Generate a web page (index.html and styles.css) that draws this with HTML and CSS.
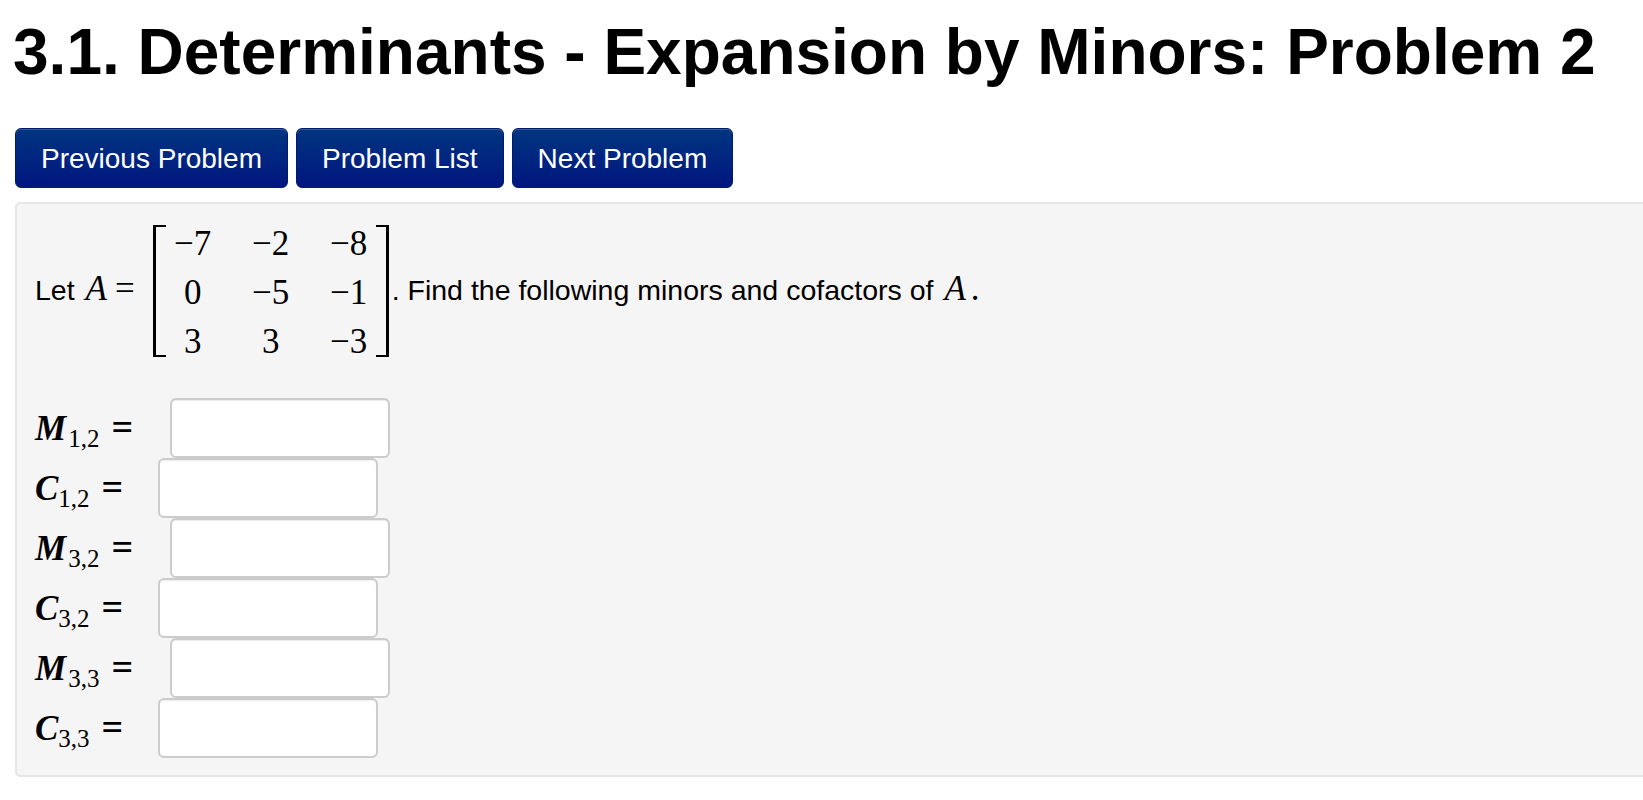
FILE: index.html
```html
<!DOCTYPE html>
<html>
<head>
<title>3.1. Determinants - Expansion by Minors: Problem 2</title>
<link rel="stylesheet" href="styles.css">
</head>

<body>

<h1>3.1. Determinants - Expansion by Minors: Problem 2</h1>

<div class="nav">
  <a class="btn">Previous Problem</a>
  <a class="btn">Problem List</a>
  <a class="btn">Next Problem</a>
</div>

<div class="well">
  <div class="intro">
    <span class="lead">Let <i class="math var">A</i><span class="math rel">=</span></span>
    <div class="matrix">
      <span>&minus;7</span><span>&minus;2</span><span>&minus;8</span>
      <span>0</span><span>&minus;5</span><span>&minus;1</span>
      <span>3</span><span>3</span><span>&minus;3</span>
    </div>
    <span class="after">. Find the following minors and cofactors of <i class="math var">A</i><span class="math stop">.</span></span>
  </div>

  <div class="answers">
    <div class="row wide"><span class="label"><b>M</b><sub>1,2</sub><span class="eq">=</span></span><input type="text"></div>
    <div class="row"><span class="label"><b>C</b><sub>1,2</sub><span class="eq">=</span></span><input type="text"></div>
    <div class="row wide"><span class="label"><b>M</b><sub>3,2</sub><span class="eq">=</span></span><input type="text"></div>
    <div class="row"><span class="label"><b>C</b><sub>3,2</sub><span class="eq">=</span></span><input type="text"></div>
    <div class="row wide"><span class="label"><b>M</b><sub>3,3</sub><span class="eq">=</span></span><input type="text"></div>
    <div class="row"><span class="label"><b>C</b><sub>3,3</sub><span class="eq">=</span></span><input type="text"></div>
  </div>
</div>

</body>
</html>
```

FILE: styles.css
```css
html, body {
  overflow: hidden;
}

body {
  margin: 0;
  padding: 0 0 0 15px;
  background: #fff;
  color: #000;
  font-family: "Liberation Sans", Arial, sans-serif;
  font-size: 28.5px;
}

h1 {
  margin: 0 0 0 -2px;
  padding-top: 15px;
  height: 73px;
  font-size: 64px;
  line-height: 74px;
  font-weight: bold;
  white-space: nowrap;
}

.nav {
  display: flex;
  gap: 8px;
  margin-top: 40px;
}

.btn {
  display: block;
  box-sizing: border-box;
  height: 60px;
  padding: 0 25px;
  font-size: 28px;
  line-height: 60px;
  color: #fff;
  border: 1px solid #001a6e;
  border-radius: 6px;
  background: linear-gradient(#003580, #001680);
  box-shadow: inset 0 1px 0 rgba(255,255,255,0.2);
}

.well {
  box-sizing: border-box;
  height: 575px;
  margin-top: 14px;
  margin-right: -10px;
  padding: 21px 0 0 18px;
  background: #f5f5f5;
  border: 2px solid #e6e6e6;
  border-right: 0;
  border-radius: 5px 0 0 5px;
}

.math {
  font-family: "Liberation Serif", "Times New Roman", serif;
  font-size: 35px;
}

.var {
  margin-left: 3px;
}

.rel {
  margin-left: 8px;
}

.stop {
  margin-left: 5px;
}

.intro {
  display: flex;
  align-items: center;
}

.lead {
  margin-top: -4px;
}

.matrix {
  display: grid;
  grid-template-columns: 78px 78px 78px;
  grid-auto-rows: 49px;
  justify-content: center;
  align-content: center;
  justify-items: center;
  align-items: center;
  box-sizing: border-box;
  width: 236px;
  height: 132px;
  margin-left: 18px;
  padding-top: 3px;
  font-family: "Liberation Serif", "Times New Roman", serif;
  font-size: 35px;
  line-height: 36px;
  border-left: 3px solid #000;
  border-right: 3px solid #000;
  position: relative;
}

.matrix::before, .matrix::after {
  content: "";
  position: absolute;
  top: 0;
  bottom: 0;
  width: 10px;
  border-top: 2px solid #000;
  border-bottom: 2px solid #000;
}

.matrix::before { left: 0; }
.matrix::after { right: 0; }

.after {
  margin-left: 3px;
  margin-top: -4px;
  white-space: nowrap;
}

.answers {
  margin-top: 41px;
}

.row {
  display: flex;
  height: 60px;
  align-items: center;
}

.label {
  width: 123px;
  margin-top: -2px;
  font-family: "Liberation Serif", "Times New Roman", serif;
  font-size: 35px;
  white-space: nowrap;
}

.row.wide .label {
  width: 135px;
}

.label b {
  font-style: italic;
}

.label sub {
  font-size: 25px;
  line-height: 0;
  vertical-align: -7px;
}

.row.wide sub {
  margin-left: 2px;
}

.eq {
  margin-left: 12px;
  font-size: 38px;
  font-weight: bold;
}

input {
  box-sizing: border-box;
  width: 220px;
  height: 60px;
  margin: 0;
  background: #fff;
  border: 2px solid #ccc;
  border-radius: 6px;
  box-shadow: inset 0 1px 1px rgba(0,0,0,0.075);
}
```
